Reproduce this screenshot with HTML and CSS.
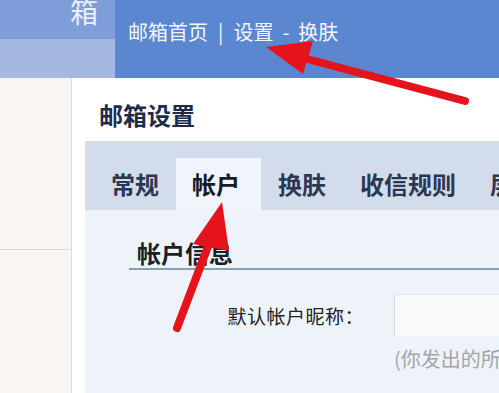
FILE: index.html
```
<!DOCTYPE html>
<html lang="zh-CN">
<head>
    <meta charset="UTF-8">
    <title>邮箱设置</title>
    <link rel="stylesheet" href="styles.css">
</head>
<body>
    <div class="header">
        <div class="logo"><span class="logo-char">箱</span></div>
        <div class="top-nav">
            <a>邮箱首页</a><span class="sep">|</span><a>设置</a><span class="dash">-</span><a>换肤</a>
        </div>
    </div>

    <div class="page">
        <div class="sidebar">
            <div class="side-block"></div>
        </div>

        <div class="main">
            <h1 class="title">邮箱设置</h1>

            <div class="tabs">
                <div class="tab">常规</div>
                <div class="tab active">帐户</div>
                <div class="tab">换肤</div>
                <div class="tab">收信规则</div>
                <div class="tab">层</div>
            </div>

            <div class="panel">
                <div class="section-title"><span>帐户信息</span></div>
                <div class="form-row">
                    <label class="form-label">默认帐户昵称：</label>
                    <div class="nick-input"></div>
                </div>
                <div class="hint">(你发出的所有邮件</div>
            </div>
        </div>
    </div>

    <!-- annotation arrows drawn over the screenshot -->
    <svg class="arrows" width="499" height="393" viewBox="0 0 499 393">
        <line x1="465" y1="101" x2="296" y2="56" stroke="#e5131b" stroke-width="8" stroke-linecap="round"/>
        <polygon points="266,47 313,41 303,74" fill="#e5131b"/>
        <line x1="177" y1="328" x2="212" y2="236" stroke="#e5131b" stroke-width="8" stroke-linecap="round"/>
        <polygon points="222,202 193,244 229,251" fill="#e5131b"/>
    </svg>
</body>
</html>
```

FILE: styles.css
```
* {
    margin: 0;
    padding: 0;
    box-sizing: border-box;
}

body {
    width: 499px;
    height: 393px;
    overflow: hidden;
    position: relative;
    font-family: "Noto Sans CJK SC", "Liberation Sans", sans-serif;
    background: #ffffff;
    color: #222;
}

.header {
    height: 78px;
    display: flex;
    background: #5b87d0;
}

.logo {
    width: 115px;
    flex-shrink: 0;
    position: relative;
    overflow: hidden;
    background: linear-gradient(180deg, #7f9dd8 0%, #7f9dd8 50%, #a6b8e1 50%, #a6b8e1 100%);
}

.logo-char {
    position: absolute;
    left: 70px;
    top: -6px;
    font-size: 28px;
    line-height: 34px;
    color: #e8eefb;
}

.top-nav {
    padding: 18px 0 0 13px;
    font-size: 20px;
    line-height: 28px;
    color: #f2f5fc;
    display: flex;
    align-items: flex-start;
    white-space: nowrap;
}

.sep {
    margin: 0 10px 0 10px;
}

.dash {
    margin: 0 9px 0 9px;
}

.page {
    display: flex;
    height: 315px;
}

.sidebar {
    width: 72px;
    flex-shrink: 0;
    background: #f8f5f2;
    border-right: 1px solid #dedbd8;
}

.side-block {
    height: 172px;
    border-bottom: 1px solid #dcdad8;
}

.main {
    flex: 1;
    min-width: 0;
    overflow: hidden;
    padding-top: 23px;
}

.title {
    margin-left: 27px;
    font-size: 24px;
    font-weight: bold;
    color: #1f2b4a;
    line-height: 28px;
    height: 40px;
}

.tabs {
    margin-left: 13px;
    height: 69px;
    background: #d3dcea;
    display: flex;
    align-items: flex-end;
    padding-left: 9px;
    white-space: nowrap;
}

.tab {
    height: 52px;
    line-height: 52px;
    padding: 0 17px;
    font-size: 24px;
    font-weight: bold;
    color: #2a3854;
}

.tab.active {
    background: #f0f4fb;
    color: #151b27;
    padding: 0 21px 0 16px;
}

.panel {
    margin-left: 13px;
    height: 183px;
    background: #eef3fa;
    padding: 30px 0 0 44px;
}

.section-title {
    border-bottom: 2px solid #8ba0ae;
    height: 30px;
    padding-left: 8px;
}

.section-title span {
    font-size: 24px;
    font-weight: bold;
    color: #1b1f26;
    line-height: 26px;
}

.form-row {
    display: flex;
    align-items: center;
    margin-top: 24px;
}

.form-label {
    width: 235px;
    text-align: right;
    font-size: 19px;
    letter-spacing: 0.5px;
    color: #222;
}

.nick-input {
    margin-left: 30px;
    flex: 1;
    height: 42px;
    background: #f9fafc;
    border-left: 1px solid #d5d8dc;
    border-top: 1px solid #e3e6ea;
}

.hint {
    margin: 8px 0 0 265px;
    font-size: 20px;
    color: #a3a5a9;
    white-space: nowrap;
    overflow: hidden;
}

.arrows {
    position: absolute;
    left: 0;
    top: 0;
}
```
